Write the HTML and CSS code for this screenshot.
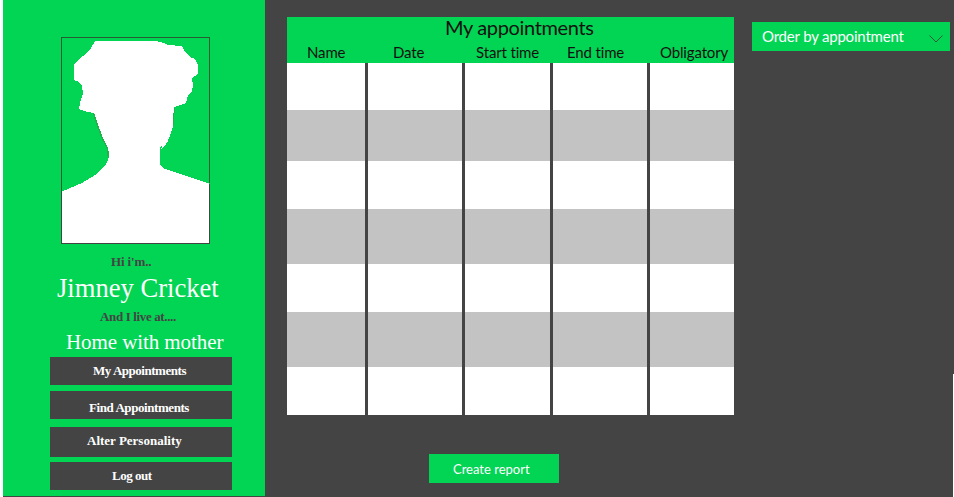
FILE: index.html
```html
<!DOCTYPE html>
<html lang="en">
<head>
<meta charset="utf-8">
<title>My appointments</title>
<link rel="stylesheet" href="styles.css">
</head>
<body>
<div class="page">
  <aside class="sidebar">
    <svg class="portrait" viewBox="61 37 149 207" width="149" height="207" shape-rendering="crispEdges">
      <path fill="#fff" d="M95 41H156L164 43L168 45L182 46L185 52L190 57L195 59L198 65V74L192 78L193 86L192 91L188 95L186 103L178 106L174.500 107L173 126L170 136L167 143L160 147V164L163 168L180 174L210 184V244H61V192L82 183L95 175L105 166L108 160L109 154L107 148L103 140L98 127L93 113L84 111L79 109L80 103L83 94L82 86L79 82L74 80V64L80 58L85 55L91 48Z"/>
      <path fill="none" stroke="#22b14c" stroke-width="1.5" d="M93.500 113L98 127L103 140L107.500 148L108.500 158"/>
      <path fill="none" stroke="#22b14c" d="M174.500 108L173 125"/>
      <path fill="none" stroke="#fff" d="M168 141L161 149M105.500 167L102 172L97 175"/>
      <path fill="none" stroke="#295c36" d="M61.500 192V37.500H209.500V183"/>
      <path fill="none" stroke="#444" d="M61.500 192V243.500H209.500V184"/>
    </svg>
    <p class="label hi">Hi i'm..</p>
    <p class="name">Jimney Cricket</p>
    <p class="label live">And I live at....</p>
    <p class="home">Home with mother</p>
    <nav class="menu">
      <a class="item mine">My Appointments</a>
      <a class="item find">Find Appointments</a>
      <a class="item alter">Alter Personality</a>
      <a class="item logout">Log out</a>
    </nav>
  </aside>
  <main class="main">
    <section class="table">
      <header class="head">
        <h1 class="title">My appointments</h1>
        <div class="cols heads">
          <span class="h-name">Name</span><span class="h-date">Date</span><span class="h-start">Start time</span><span class="h-end">End time</span><span class="h-obl">Obligatory</span>
        </div>
      </header>
      <div class="cols grid">
        <i></i><i></i><i></i><i></i><i></i>
        <i class="alt"></i><i class="alt"></i><i class="alt"></i><i class="alt"></i><i class="alt"></i>
        <i></i><i></i><i></i><i></i><i></i>
        <i class="alt"></i><i class="alt"></i><i class="alt"></i><i class="alt"></i><i class="alt"></i>
        <i></i><i></i><i></i><i></i><i></i>
        <i class="alt"></i><i class="alt"></i><i class="alt"></i><i class="alt"></i><i class="alt"></i>
        <i></i><i></i><i></i><i></i><i></i>
      </div>
    </section>
    <button class="report">Create report</button>
  </main>
  <div class="side">
    <div class="order"><span>Order by appointment</span>
      <svg width="14" height="8" viewBox="0 0 14 8"><path d="M.5 .5L7 7L13.500 .5" fill="none" stroke="#255c35"/></svg>
    </div>
  </div>
  <div class="edge"></div>
</div>
</body>
</html>
```
FILE: styles.css
```css
* { box-sizing: border-box; }
body { margin: 0; background: #444; overflow: hidden; }
p, h1 { margin: 0; font-weight: normal; white-space: nowrap; }
.page { display: flex; width: 954px; height: 497px; border-left: 3px solid #fff; background: #444; }
.sidebar {
  width: 262px; height: 496px; padding-top: 37px; flex: none;
  background: #02d454; color: #fff;
  font-family: "Liberation Serif", serif;
}
.portrait { display: block; margin-left: 58px; }
.label { height: 18px; line-height: 18px; font-size: 13px; font-weight: bold; color: #444; }
.hi { margin: 9px 0 0 108px; letter-spacing: -.15px; }
.name { height: 32px; line-height: 31px; margin: 2px 0 0 54px; font-size: 26.600px; }
.live { margin: 3px 0 0 97px; letter-spacing: -.36px; }
.home { height: 26px; line-height: 26px; margin: 3px 0 0 63px; font-size: 21px; letter-spacing: -.08px; }
.menu { width: 182px; margin: 2px 0 0 47px; }
.item { display: block; height: 28px; line-height: 28px; background: #444; font-size: 13px; font-weight: bold; white-space: nowrap; }
.mine { padding-left: 43px; letter-spacing: -.47px; }
.find { margin-top: 6px; padding-left: 39px; line-height: 34px; letter-spacing: -.43px; }
.alter { margin-top: 8px; height: 30px; padding-left: 37px; }
.logout { margin-top: 5px; padding-left: 62px; letter-spacing: -.5px; }
.main { width: 447px; margin: 17px 0 0 22px; flex: none; font-family: Lato, sans-serif; }
.head { height: 46px; background: #02d454; color: #111; }
.title { height: 24px; line-height: 21px; padding-left: 158px; font-size: 20px; letter-spacing: -.35px; }
.cols { display: grid; grid-template-columns: 78px 94px 85px 94px 84px; column-gap: 3px; }
.heads { height: 22px; line-height: 22px; font-size: 15px; letter-spacing: -.15px; white-space: nowrap; }
.h-name { padding-left: 20px; }
.h-date { padding-left: 25px; }
.h-start { padding-left: 11px; }
.h-end { padding-left: 14px; }
.h-obl { padding-left: 10px; }
.grid { grid-template-rows: 47px 51px 48px 55px 48px 55px 48px; }
.grid i { background: #fff; }
.grid .alt { background: #c3c3c3; }
.report {
  display: block; width: 130px; height: 29px; margin: 39px 0 0 142px; padding: 2px 0 0 24px;
  border: 0; background: #02d454; color: #fff; text-align: left;
  font: 13px/27px Lato, sans-serif; white-space: nowrap;
}
.side { margin: 22px 0 0 18px; }
.order {
  display: flex; align-items: center; justify-content: space-between;
  width: 198px; height: 29px; padding: 0 7px 0 10px;
  background: #02d454; color: #fff; font: 15px/29px Lato, sans-serif; letter-spacing: -.2px; white-space: nowrap;
}
.order svg { margin-top: 4px; }
.edge { width: 1px; height: 123px; margin: 374px 0 0 auto; background: #fff; }
```
